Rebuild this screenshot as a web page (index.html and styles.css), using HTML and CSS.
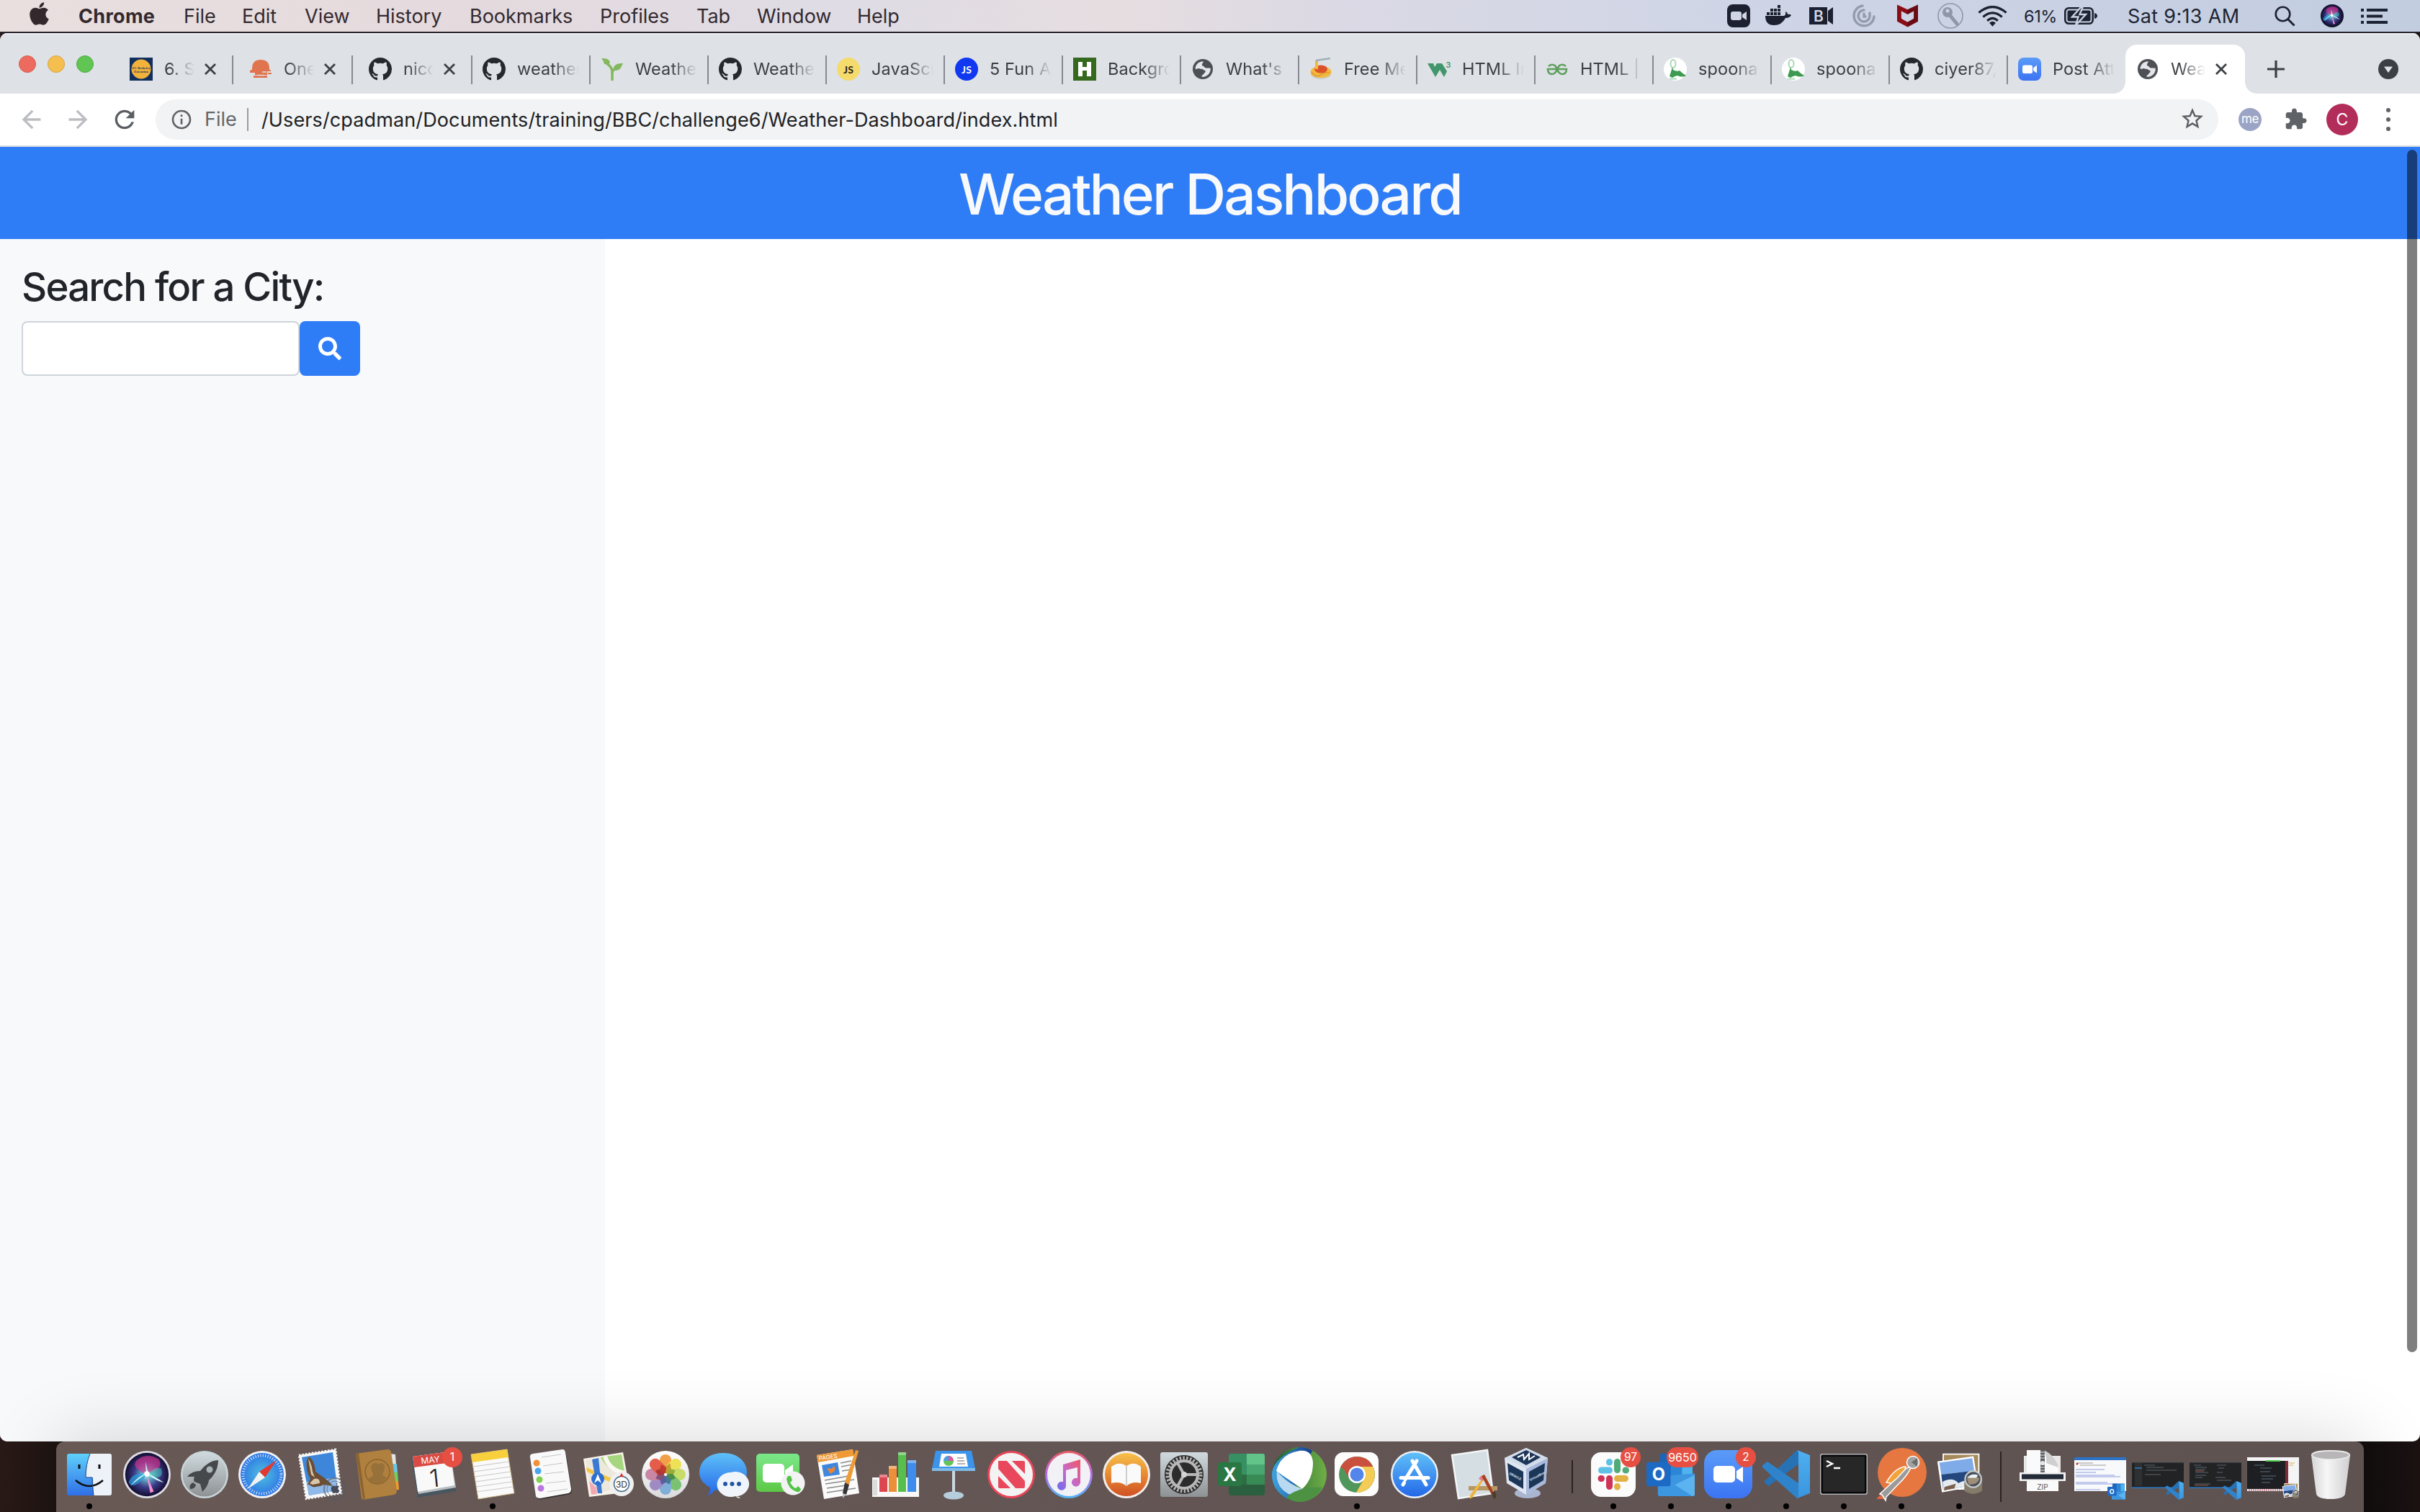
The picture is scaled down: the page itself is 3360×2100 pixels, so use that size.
FILE: index.html
```html
<!DOCTYPE html>
<html lang="en">
<head>
<meta charset="utf-8">
<title>Weather Dashboard</title>
<link rel="stylesheet" href="styles.css">
</head>
<body>
<svg class="defs" width="0" height="0">
  <defs>
    <linearGradient id="gBlue" x1="0" y1="0" x2="0" y2="1"><stop offset="0" stop-color="#5fc0f8"/><stop offset="1" stop-color="#2468e8"/></linearGradient>
    <linearGradient id="gZoom" x1="0" y1="0" x2="0" y2="1"><stop offset="0" stop-color="#5a9bf8"/><stop offset="1" stop-color="#3c74f2"/></linearGradient>
    <linearGradient id="gFinder" x1="0" y1="0" x2="0" y2="1"><stop offset="0" stop-color="#5fd0fa"/><stop offset="1" stop-color="#2f6fe8"/></linearGradient>
    <linearGradient id="gSilver" x1="0" y1="0" x2="0" y2="1"><stop offset="0" stop-color="#d0dade"/><stop offset="1" stop-color="#8e9294"/></linearGradient>
    <linearGradient id="gWhite" x1="0" y1="0" x2="0" y2="1"><stop offset="0" stop-color="#fff"/><stop offset="1" stop-color="#d9dadc"/></linearGradient>
    <linearGradient id="gGreen" x1="0" y1="0" x2="0" y2="1"><stop offset="0" stop-color="#7be88a"/><stop offset="1" stop-color="#5cc845"/></linearGradient>
    <linearGradient id="gOrange" x1="0" y1="0" x2="0" y2="1"><stop offset="0" stop-color="#f7c04b"/><stop offset=".5" stop-color="#e88a32"/><stop offset="1" stop-color="#cf5124"/></linearGradient>
    <linearGradient id="gMusic" x1="0" y1="0" x2="0" y2="1"><stop offset="0" stop-color="#ee5a5f"/><stop offset=".5" stop-color="#b46be8"/><stop offset="1" stop-color="#52b8f5"/></linearGradient>
    <linearGradient id="gNote" x1="1" y1="0" x2="0" y2="1"><stop offset="0" stop-color="#f05660"/><stop offset=".5" stop-color="#c968c8"/><stop offset="1" stop-color="#6a6cf0"/></linearGradient>
    <linearGradient id="gCode" x1="0" y1="0" x2="0" y2="1"><stop offset="0" stop-color="#4fb0f0"/><stop offset="1" stop-color="#3a95de"/></linearGradient>
    <linearGradient id="gCan" x1="0" y1="0" x2="1" y2="0"><stop offset="0" stop-color="#d6d6d8"/><stop offset=".4" stop-color="#f6f6f6"/><stop offset="1" stop-color="#cfcfd1"/></linearGradient>
    <linearGradient id="gMesh" x1="0" y1="0" x2="1" y2="0"><stop offset="0" stop-color="#1e5f35"/><stop offset="1" stop-color="#6fae45"/></linearGradient>
    <linearGradient id="gRing" x1="0" y1="0" x2="1" y2="0"><stop offset="0" stop-color="#3fa4e0"/><stop offset="1" stop-color="#143c8c"/></linearGradient>
    <radialGradient id="gSafari"><stop offset="0" stop-color="#4fc0de"/><stop offset="1" stop-color="#2e76e6"/></radialGradient>
    <radialGradient id="gSiri"><stop offset="0" stop-color="#f4ffff"/><stop offset=".2" stop-color="#68b9cf"/><stop offset=".6" stop-color="#3a3a86"/><stop offset="1" stop-color="#130c30"/></radialGradient>

    <symbol id="github" viewBox="0 0 16 16"><path fill="#24292e" d="M8 0C3.58 0 0 3.58 0 8c0 3.54 2.29 6.53 5.47 7.59.4.07.55-.17.55-.38 0-.19-.01-.82-.01-1.49-2.01.37-2.53-.49-2.69-.94-.09-.23-.48-.94-.82-1.13-.28-.15-.68-.52-.01-.53.63-.01 1.08.58 1.23.82.72 1.21 1.87.87 2.33.66.07-.52.28-.87.51-1.07-1.78-.2-3.64-.89-3.64-3.95 0-.87.31-1.59.82-2.15-.08-.2-.36-1.02.08-2.12 0 0 .67-.21 2.2.82.64-.18 1.32-.27 2-.27.68 0 1.36.09 2 .27 1.53-1.04 2.2-.82 2.2-.82.44 1.1.16 1.92.08 2.12.51.56.82 1.27.82 2.15 0 3.07-1.87 3.75-3.65 3.95.29.25.54.73.54 1.48 0 1.07-.01 1.93-.01 2.2 0 .21.15.46.55.38A8.013 8.013 0 0016 8c0-4.42-3.58-8-8-8z"/></symbol>
    <symbol id="globe" viewBox="0 0 32 32"><circle cx="16" cy="16" r="14" fill="#4d5156"/><path class="land" d="M5.500 15.500C6 10 10 5.500 16.500 5.300C17.300 7 14.300 8.300 15 10.500C15.500 12.300 18 11.600 18.500 13.500C19.500 15.500 24 13.800 26.800 15C27 20 24 25.500 17.500 26.800C14.500 27.200 13.500 25.500 15.500 24.200C17.500 23.500 17.300 21.500 19 20.800C20.500 19.300 19.500 17.500 17.500 17.500C16 15.200 13 16.500 11.500 15.300C9.500 14 7.500 16.500 5.500 15.500Z"/></symbol>
    <symbol id="spoon" viewBox="0 0 32 32"><circle cx="16" cy="16" r="16" fill="#fff"/><ellipse cx="13" cy="8.500" rx="3.500" ry="5.500" fill="none" stroke="#a9d8b4" stroke-width="2"/><path d="M12 13L13 17Q18 20 22 18Q26 22 31 25Q26 28 19 25Q14 26 12 28L8 26Q10 20 12 13Z" fill="#3f9a51"/><path d="M8 28H18V31H8Z" fill="#c5e5cc"/></symbol>
    <symbol id="close" viewBox="0 0 20 20"><path d="M3 3L17 17M17 3L3 17" stroke="#3c4043" stroke-width="2.800"/></symbol>
    <symbol id="siri" viewBox="0 0 70 70"><circle cx="35" cy="35" r="32" fill="url(#gSiri)"/><path d="M35 35Q10 24 20 14Q34 2 52 12Q62 26 35 35Z" fill="#d8328e" opacity=".65"/><path d="M35 35Q14 60 8 46Q14 30 35 35Z" fill="#2aa2e0" opacity=".7"/><path d="M35 35Q62 46 56 26Q48 22 35 35Z" fill="#4ed5c0" opacity=".5"/><path d="M34 34L40 62L45 60Z" fill="#f590cf"/><path d="M35 33Q20 44 10 52Q24 36 35 33ZM35 33Q50 40 60 47Q46 44 35 33ZM34 35L33 16L37 34Z" fill="#cffff5"/><circle cx="35" cy="34" r="4" fill="#fff"/></symbol>
    <symbol id="code" viewBox="0 0 66 67"><path d="M2 44L8 50L66 8L48 0Z" fill="#2772b5"/><path d="M0 21L7 16L50 46V67L48 67L0 24Z" fill="#2f83cb"/><path d="M48 0L66 7V60L48 67Q50 66 50 62V4Q50 1 48 0Z" fill="url(#gCode)"/></symbol>
    <symbol id="outlook" viewBox="0 0 68 66"><rect x="19" y="6" width="46" height="38" rx="2" fill="#1a66b8"/><rect x="34" y="8" width="16" height="34" fill="#2b86d6"/><rect x="50" y="8" width="15" height="34" fill="#4fb3ee"/><path d="M16 38L68 34V63Q68 66 65 66H19Q16 66 16 63Z" fill="#3c96e0"/><path d="M68 36V63Q68 66 65 66L40 50Z" fill="#5bb4f0"/><rect x="0" y="18" width="34" height="34" rx="3" fill="#1d6ac4"/><text x="17" y="44" class="t-outlook">O</text></symbol>
    <symbol id="preview" viewBox="0 0 70 70"><path d="M10 3H66V58H10Z" fill="#fff"/><path d="M12 5H64V56H12Z" fill="#a58a5c"/><path d="M2 15L57 7L64 52L9 62Z" fill="#fff"/><path d="M5 17L55 10L58 29L8 35Z" fill="#7fabe8"/><path d="M8 35L58 29L61 50L11 59Z" fill="#24477e"/><path d="M10 46Q25 38 34 48Q45 42 60 44L61 50L11 59Z" fill="#e4eaf0"/><path d="M13 54L30 49L28 56L12 59Z" fill="#7b5f4a"/><path d="M43 42V60Q56 69 70 60V42Z" fill="#847b69"/><circle cx="56.500" cy="42" r="13.500" fill="#c6c8c8"/><circle cx="56.500" cy="42" r="11" fill="#48505a"/><path d="M47 42Q55 33 66 41Q63 51 50 50Z" fill="#a08f78"/><path d="M47 40Q54 32 64 36L61 40Z" fill="#eef3f7"/></symbol>
  </defs>
</svg>

<header class="menubar">
  <svg class="apple" viewBox="0 0 384 512"><path fill="#33282b" d="M318.700 268.700c-.2-36.700 16.400-64.400 50-84.800-18.800-26.900-47.200-41.700-84.700-44.600-35.500-2.800-74.300 20.700-88.500 20.700-15 0-49.400-19.700-76.400-19.700C63.300 141.200 4 184.800 4 273.500q0 39.300 14.400 81.200c12.800 36.700 59 126.700 107.200 125.200 25.200-.6 43-17.900 75.800-17.900 31.800 0 48.300 17.900 76.400 17.900 48.600-.7 90.400-82.500 102.600-119.300-65.200-30.700-61.700-90-61.700-91.900zm-56.600-164.200c27.300-32.400 24.800-61.900 24-72.500-24.100 1.400-52 16.400-67.900 34.900-17.500 19.800-27.800 44.300-25.600 71.900 26.100 2 49.900-11.400 69.500-34.300z"/></svg>
  <nav class="menus"><b>Chrome</b><span>File</span><span>Edit</span><span>View</span><span>History</span><span>Bookmarks</span><span>Profiles</span><span>Tab</span><span>Window</span><span>Help</span></nav>
  <div class="status">
    <svg class="s-zoom" viewBox="0 0 32 32"><rect width="32" height="32" rx="8" fill="#1c2030"/><rect x="5" y="10" width="15" height="12" rx="3" fill="#cfd5e5"/><path d="M21 14L27 10V22L21 18Z" fill="#cfd5e5"/></svg>
    <svg class="s-docker" viewBox="0 0 36 30"><path fill="#1c2030" d="M0 15H26Q29 14 28 9Q31 10 31 13Q34 12 36 14Q34 18 28 18Q23 28 12 28Q0 28 0 15ZM2 10h4v4H2zM7 10h4v4H7zM12 10h4v4h-4zM17 10h4v4h-4zM7 5h4v4H7zM12 5h4v4h-4zM17 5h4v4h-4zM17 0h4v4h-4z"/></svg>
    <svg class="s-b" viewBox="0 0 33 24"><path fill="#1c2030" d="M0 0H25V24H0ZM26 5L33 0V24L26 19Z"/><text x="13" y="20" class="t-bj">B</text></svg>
    <svg class="s-swirl" viewBox="0 0 32 32"><g fill="none" stroke="#959cae" stroke-width="3.500" stroke-linecap="round"><path d="M14 2A14 14 0 1 0 30 17"/><path d="M16 8A8 8 0 1 0 24 17V12"/><path d="M16 13V17H18"/></g></svg>
    <svg class="s-shield" viewBox="0 0 30 32"><path fill="#8a0d16" d="M0 0L15 7L30 0V24L15 32L0 24Z"/><path fill="#ced5e5" d="M6 9L15 14L24 9V20L15 25L6 20Z"/><path fill="#4a0710" d="M15 7L30 0V24L15 32V25L24 20V9L15 14Z" opacity=".5"/></svg>
    <svg class="s-key" viewBox="0 0 36 36"><circle cx="18" cy="18" r="17" fill="none" stroke="#8e96a8" stroke-width="1.600"/><circle cx="14" cy="13" r="7" fill="#8e96a8"/><circle cx="14" cy="11" r="2.500" fill="#cbd3e3"/><path d="M17 17L27 29" stroke="#8e96a8" stroke-width="5" stroke-linecap="round"/></svg>
    <svg class="s-wifi" viewBox="0 0 42 29"><g fill="none" stroke="#1c2130" stroke-width="3.300"><path d="M1.500 9.500Q21-7 40.500 9.500"/><path d="M7.500 15.500Q21 4 34.500 15.500"/><path d="M13.500 21Q21 14 28.500 21"/></g><path d="M16.500 24Q21 20 25.500 24L21 29Z" fill="#1c2130"/></svg>
    <span class="pct">61%</span>
    <svg class="s-batt" viewBox="0 0 46 24"><rect x="1.300" y="1.300" width="38.400" height="21.400" rx="5" fill="none" stroke="#1c2332" stroke-width="2.600"/><rect x="4.500" y="4.500" width="32" height="15" rx="2" fill="#1c2332"/><path d="M42 8Q46 9 46 12T42 16Z" fill="#1c2332"/><path d="M24 -1L11 13.500H19.500L16 25L30 10H21.500L26 -1Z" fill="#1c2332" stroke="#c9d2e2" stroke-width="2.400"/></svg>
    <span class="clock">Sat 9:13 AM</span>
    <svg class="s-search" viewBox="0 0 29 29"><circle cx="11.500" cy="11.500" r="9.800" fill="none" stroke="#1c2332" stroke-width="2.600"/><path d="M18.500 18.500L27.500 27.500" stroke="#1c2332" stroke-width="3"/></svg>
    <svg class="s-siri" viewBox="1 1 68 68"><circle cx="35" cy="35" r="34" fill="#12162a"/><use href="#siri"/></svg>
    <svg class="s-list" viewBox="0 0 37 21"><path fill="#1c2332" d="M0 0h4v4H0zM8 0h29v4H8zM0 8.500h4v4H0zM8 8.500h22v4H8zM0 17h4v4H0zM8 17h29v4H8z"/></svg>
  </div>
</header>

<main class="window">
  <div class="tabstrip">
    <div class="lights"><i class="red"></i><i class="yellow"></i><i class="green"></i></div>
    <div class="tab wide"><svg viewBox="0 0 32 32"><rect width="32" height="32" fill="#12305e"/><circle cx="16" cy="16" r="13.500" fill="#f2b23c"/><text x="16" y="15.500" class="t-ucb">UC Berkeley</text><text x="16" y="21" class="t-ucb">Extension</text></svg><span>6. S</span><svg class="x"><use href="#close"/></svg></div>
    <div class="tab wide"><svg viewBox="0 0 32 32"><path fill="#e0744f" d="M4 17V15Q4 3 16 3T28 15V17H30V19H2V17ZM1 18H17V21H1ZM19 21H24V23H19ZM26 21H31V23H26ZM8 19H25V24H8ZM6 25H25V28H6Z"/><path d="M18 20H24M25 20H30M12 24.500H21" stroke="#dee1e6" stroke-width="1.500"/></svg><span>One</span><svg class="x"><use href="#close"/></svg></div>
    <div class="tab wide"><svg><use href="#github"/></svg><span>nico</span><svg class="x"><use href="#close"/></svg></div>
    <div class="tab"><svg><use href="#github"/></svg><span>weather</span></div>
    <div class="tab"><svg viewBox="0 0 32 32"><path d="M16 32V19Q15 12 8 8" fill="none" stroke="#83b85d" stroke-width="3.500"/><path d="M1 1Q12 0 13 7L11 9H5Q4 4 1 1ZM31 8Q18 7 17 17L19 18Q26 18 28 14Z" fill="#83b85d"/><path d="M16 22Q17 16 22 15" stroke="#83b85d" stroke-width="3" fill="none"/></svg><span>Weather</span></div>
    <div class="tab"><svg><use href="#github"/></svg><span>Weather</span></div>
    <div class="tab"><svg viewBox="0 0 32 32"><circle cx="16" cy="16" r="16" fill="#f5da6c"/><text x="16" y="21.500" class="t-js">JS</text></svg><span>JavaScri</span></div>
    <div class="tab"><svg viewBox="0 0 32 32"><circle cx="16" cy="16" r="16" fill="#0f38f0"/><text x="16" y="21.500" class="t-js light">JS</text></svg><span>5 Fun A</span></div>
    <div class="tab"><svg viewBox="0 0 32 32"><rect width="32" height="32" fill="#35691e"/><path d="M7 6h6v7h6V6h6v20h-6v-8h-6v8H7z" fill="#fff"/></svg><span>Backgro</span></div>
    <div class="tab"><svg><use href="#globe"/></svg><span>What's</span></div>
    <div class="tab"><svg viewBox="0 0 32 32"><ellipse cx="16" cy="23" rx="14" ry="7" fill="#c9cfcb"/><ellipse cx="16" cy="20" rx="14.500" ry="8" fill="#f2b93f"/><path d="M3 20Q9 29 16 24T28 21" fill="none" stroke="#e09a2c" stroke-width="1.500"/><ellipse cx="16" cy="16" rx="9" ry="5.500" fill="#dd5329"/><path d="M10 4V16" stroke="#f2b93f" stroke-width="4"/><path d="M9 4L29 1" stroke="#9db0b9" stroke-width="2.500"/></svg><span>Free Me</span></div>
    <div class="tab"><svg viewBox="0 0 32 32"><path d="M0 8H8L10 13L13 8H20L27 19L23 27L17 17L11 27Z" fill="#41976b"/><text x="29" y="14" class="t-w3">3</text></svg><span>HTML In</span></div>
    <div class="tab"><svg viewBox="0 0 32 32"><g fill="none" stroke="#5f9f5e" stroke-width="2.600"><path d="M4 12Q8 8 13 11L16 16H3Q3 22 8 23Q14 23 16 16"/><path d="M28 12Q24 8 19 11L16 16H29Q29 22 24 23Q18 23 16 16"/></g></svg><span>HTML |</span></div>
    <div class="tab"><svg><use href="#spoon"/></svg><span>spoona</span></div>
    <div class="tab"><svg><use href="#spoon"/></svg><span>spoona</span></div>
    <div class="tab"><svg><use href="#github"/></svg><span>ciyer87,</span></div>
    <div class="tab last"><svg viewBox="0 0 32 32"><rect width="32" height="32" rx="8" fill="url(#gZoom)"/><rect x="6" y="10.500" width="14" height="11.500" rx="2.500" fill="#fff"/><path d="M21 14.500L26 10.500V21.500L21 18Z" fill="#fff"/></svg><span>Post Att</span></div>
    <div class="tab active"><svg><use href="#globe"/></svg><span>Wea</span><svg class="x"><use href="#close"/></svg></div>
    <svg class="plus" viewBox="0 0 24 24"><path d="M12 0V24M0 12H24" stroke="#3c4043" stroke-width="3.200"/></svg>
    <svg class="drop" viewBox="0 0 28 28"><circle cx="14" cy="14" r="14" fill="#3c4043"/><path d="M8 10.500H20L14 19Z" fill="#dee1e6"/></svg>
  </div>

  <div class="toolbar">
    <svg class="nav-i" viewBox="0 0 24 24"><path fill="#bbbdc0" d="M19.500 11H7.830l5.590-5.590L12 4l-8 8 8 8 1.410-1.410L7.830 13H19.500z"/></svg>
    <svg class="nav-i fwd" viewBox="0 0 24 24"><path fill="#bbbdc0" d="M12 4l-1.410 1.410L16.170 11H4.500v2h11.670l-5.580 5.590L12 20l8-8z"/></svg>
    <svg class="nav-i rel" viewBox="0 0 24 24"><path fill="#5a5e63" d="M17.650 6.350C16.200 4.900 14.210 4 12 4c-4.420 0-7.990 3.580-7.990 8s3.570 8 7.990 8c3.730 0 6.840-2.550 7.730-6h-2.080c-.82 2.330-3.040 4-5.650 4-3.310 0-6-2.690-6-6s2.690-6 6-6c1.660 0 3.140.69 4.220 1.780L13 11h7V4l-2.350 2.350z"/></svg>
    <div class="omnibox">
      <svg class="info" viewBox="0 0 24 24"><path fill="#5f6368" d="M11 7h2v2h-2zm0 4h2v6h-2zm1-9C6.480 2 2 6.480 2 12s4.480 10 10 10 10-4.480 10-10S17.520 2 12 2zm0 18c-4.410 0-8-3.590-8-8s3.590-8 8-8 8 3.590 8 8-3.590 8-8 8z"/></svg>
      <span class="scheme">File</span>
      <span class="url">/Users/cpadman/Documents/training/BBC/challenge6/Weather-Dashboard/index.html</span>
      <svg class="star" viewBox="0 0 24 24"><path fill="#5a5e63" d="M22 9.240l-7.190-.62L12 2 9.190 8.630 2 9.240l5.460 4.730L5.820 21 12 17.270 18.180 21l-1.630-7.030L22 9.240zM12 15.400l-3.760 2.270 1-4.280-3.320-2.880 4.380-.38L12 6.100l1.710 4.040 4.380.38-3.320 2.880 1 4.280L12 15.400z"/></svg>
    </div>
    <span class="me">me</span>
    <svg class="puzzle" viewBox="0 0 24 24"><path fill="#5f6368" d="M20.500 11H19V7c0-1.100-.9-2-2-2h-4V3.500C13 2.120 11.880 1 10.500 1S8 2.120 8 3.500V5H4c-1.100 0-1.990.9-1.990 2v3.800H3.500c1.490 0 2.700 1.210 2.700 2.700s-1.210 2.700-2.700 2.700H2V20c0 1.100.9 2 2 2h3.800v-1.500c0-1.490 1.210-2.700 2.700-2.700 1.490 0 2.700 1.210 2.700 2.700V22H17c1.100 0 2-.9 2-2v-4h1.500c1.380 0 2.500-1.120 2.500-2.500S21.880 11 20.500 11z"/></svg>
    <span class="avatar">C</span>
    <span class="kebab"><i></i><i></i><i></i></span>
  </div>

  <div class="page">
    <h1>Weather Dashboard</h1>
    <aside class="sidebar">
      <h3>Search for a City:</h3>
      <form class="search">
        <input type="text" aria-label="City">
        <button type="button" aria-label="Search"><svg viewBox="0 0 512 512"><path fill="#fff" d="M505 442.700L405.300 343c-4.500-4.500-10.600-7-17-7H372c27.600-35.300 44-79.700 44-128C416 93.100 322.900 0 208 0S0 93.100 0 208s93.100 208 208 208c48.300 0 92.700-16.400 128-44v16.300c0 6.400 2.500 12.500 7 17l99.700 99.700c9.400 9.400 24.600 9.400 33.900 0l28.300-28.300c9.400-9.400 9.400-24.600.1-34zM208 336c-70.700 0-128-57.200-128-128 0-70.700 57.200-128 128-128 70.700 0 128 57.200 128 128 0 70.700-57.200 128-128 128z"/></svg></button>
      </form>
    </aside>
    <div class="scrollbar"></div>
  </div>
</main>

<footer class="dock">
  <div class="app on"><svg viewBox="0 0 80 90"><rect x="9" y="17" width="62" height="58" rx="3" fill="url(#gFinder)"/><path d="M41 17H68Q71 17 71 20V72Q71 75 68 75H46Q45 62 45 50H35Q35 30 41 17Z" fill="#edf1f8"/><path d="M26 32V38M54 32V38" stroke="#111" stroke-width="3"/><path d="M21 54Q40 70 59 54" fill="none" stroke="#111" stroke-width="2.500"/><path d="M41 17Q35 32 35 50H44Q44 62 46 75" fill="none" stroke="#1a4a80" stroke-width="1"/></svg></div>
  <div class="app"><svg viewBox="0 0 80 90"><circle cx="40" cy="46" r="33" fill="#dedee6"/><use href="#siri" x="7" y="13" width="66" height="66"/></svg></div>
  <div class="app"><svg viewBox="0 0 80 90"><circle cx="40" cy="46" r="33" fill="#c9d6db"/><circle cx="40" cy="46" r="30.500" fill="url(#gSilver)"/><path d="M59 26Q46 26 34 41Q22 41 16 49L26 49Q24 53 26 56L34 59Q35 63 37 70Q45 62 46 54Q59 42 59 26ZM24 57Q18 60 20 66Q27 66 28 60Z" fill="#46494b"/><circle cx="47" cy="39" r="4.500" fill="#aab3b7"/></svg></div>
  <div class="app"><svg viewBox="0 0 80 90"><circle cx="40" cy="46" r="33" fill="#f1f1f3"/><circle cx="40" cy="46" r="30" fill="url(#gSafari)"/><circle cx="40" cy="46" r="26.500" fill="none" stroke="#e6f0fa" stroke-width="4" stroke-dasharray="1 2.470"/><path d="M60 26L44 50L36 42Z" fill="#e2382f"/><path d="M20 66L44 50L36 42Z" fill="#f2f2f2"/></svg></div>
  <div class="app"><svg viewBox="0 0 80 90"><path d="M11 19L62 11L70 72L21 80Z" fill="#f7f7f7" stroke="#f7f7f7" stroke-width="2.500" stroke-dasharray="2.500 2"/><path d="M15 22L58 15L65 68L25 75Z" fill="#3e86da"/><path d="M22 56L63 50L65 68L25 75Z" fill="#8fb9e8"/><path d="M22 26L25 21Q33 27 34 42L44 49Q54 56 58 62L46 60Q38 64 30 63L23 59L27 52Q20 40 22 26Z" fill="#6b4e33"/><path d="M24 24Q29 32 30 42L33 50L28 46ZM32 52Q40 50 40 58L30 60L26 58Z" fill="#d8c6ab"/><circle cx="61" cy="66" r="15" fill="none" stroke="#555a64" stroke-width="2" opacity=".65"/><circle cx="61" cy="66" r="11" fill="none" stroke="#555a64" stroke-width="1" opacity=".6"/><svg x="55" y="57" width="13" height="16" viewBox="0 0 384 512"><path fill="#454c5c" d="M318.700 268.700c-.2-36.700 16.400-64.400 50-84.800-18.800-26.900-47.200-41.700-84.700-44.600-35.500-2.800-74.300 20.700-88.500 20.700-15 0-49.400-19.700-76.400-19.700C63.300 141.200 4 184.800 4 273.500q0 39.300 14.400 81.200c12.800 36.700 59 126.700 107.200 125.200 25.200-.6 43-17.900 75.800-17.900 31.800 0 48.300 17.900 76.400 17.900 48.600-.7 90.400-82.500 102.600-119.300-65.200-30.700-61.700-90-61.700-91.900zm-56.600-164.200c27.300-32.400 24.800-61.900 24-72.500-24.100 1.400-52 16.400-67.900 34.900z"/></svg></svg></div>
  <div class="app"><svg viewBox="0 0 80 90"><path d="M50 16L65 18L66 34H58Z" fill="#e4e4e4"/><path d="M60 31H67L68 44H60Z" fill="#6cc5e6"/><path d="M60 43H68L69 56H60Z" fill="#6ed05f"/><path d="M60 55H69L70 67H60Z" fill="#f29a2c"/><path d="M10 17L54 11Q58 11 59 15L67 68Q67 73 63 74L20 81L18 79Z" fill="#b0803f"/><path d="M10 17L14 16L23 80L20 81Z" fill="#8c6330"/><circle cx="40" cy="42" r="17" fill="none" stroke="#8b642f" stroke-width="1.500"/><path d="M27 52Q35 48 34 45Q28 34 35 30Q40 29 41 32Q47 27 50 34Q50 42 47 45Q47 48 53 50Q47 58 40 58Q32 58 27 52Z" fill="#97703a"/></svg></div>
  <div class="app"><svg viewBox="0 0 80 90"><path d="M7 24L14 20L69 66L70 69L16 78Z" fill="#48565f"/><path d="M9 21L61 14L69 64L17 73Z" fill="#b9bec2"/><path d="M9 21L61 14L67 61L16 70Z" fill="#f9f9f9"/><path d="M9 21L61 14L64 29L11 36Z" fill="#d84a43"/><text x="34" y="30" class="t-may" transform="rotate(-7 34 30)">MAY</text><text x="40" y="63" class="t-day" transform="rotate(-6 40 60)">1</text></svg><em>1</em></div>
  <div class="app on"><svg viewBox="0 0 80 90"><path d="M10 18L60 11L70 72L20 80Z" fill="#fafafa" stroke="#c9b683" stroke-width="1"/><path d="M10 18L60 11L62 22L12 29Z" fill="#f8cf3d"/><path d="M13 35L63 28M14 42L64 35M15 49L65 42M16 56L66 49M17 63L67 56M18 70L68 63" stroke="#c9c9c9" stroke-width="1.200"/></svg></div>
  <div class="app"><svg viewBox="0 0 80 90"><path d="M12 22Q11 18 16 17L57 11Q60 11 61 15L69 66Q69 71 65 72L26 79Q21 79 20 76Z" fill="#33302f" transform="translate(1 1.500)"/><path d="M12 22Q11 18 16 17L57 11Q60 11 61 15L69 66Q69 71 65 72L26 79Q21 79 20 76Z" fill="#f9f9f9"/><circle cx="21" cy="30" r="4.500" fill="#f29037"/><circle cx="23" cy="41" r="4.500" fill="#49a6ee"/><circle cx="25" cy="53" r="4.500" fill="#7fd14f"/><circle cx="27" cy="65" r="4.500" fill="#bb77df"/><path d="M28 22L55 18M30 34L57 30M32 45L59 42M34 58L62 55M36 70L64 66" stroke="#c6c6c6"/></svg></div>
  <div class="app"><svg viewBox="0 0 80 90"><path d="M6 24L61 15L71 70L14 77Z" fill="#f6f3ea"/><path d="M9 26L59 18L66 62L17 74Z" fill="#ede8dc"/><path d="M30 22L59 18L63 42Q40 42 30 22Z" fill="#a6d67d"/><path d="M36 21Q42 40 63 44" fill="none" stroke="#faf8f2" stroke-width="6"/><path d="M10 36L66 60L65 66L11 42Z" fill="#f5c544"/><path d="M14 55L24 64L25 73L17 74Z" fill="#f2a9b2"/><path d="M18 25L27 23L32 72H26Z" fill="#3b7ad3"/><circle cx="26" cy="52" r="9" fill="#2c6fd3"/><path d="M26 45L31 58L26 54L21 58Z" fill="#fff"/><circle cx="59" cy="59" r="17" fill="#f0f0f0"/><circle cx="59" cy="59" r="10.500" fill="#fff" stroke="#456c86" stroke-width="1.500"/><text x="59" y="63.500" class="t-3d">3D</text><path d="M59 44L62 49H56Z" fill="#da302e"/></svg></div>
  <div class="app"><svg viewBox="0 0 80 90"><circle cx="40" cy="46" r="33" fill="url(#gWhite)"/><g transform="translate(40 46)" opacity=".92"><rect x="-8" y="-28" width="16" height="26" rx="8" fill="#f2993a"/><rect x="-8" y="-28" width="16" height="26" rx="8" fill="#efe04a" transform="rotate(45)"/><rect x="-8" y="-28" width="16" height="26" rx="8" fill="#c5dc5e" transform="rotate(90)"/><rect x="-8" y="-28" width="16" height="26" rx="8" fill="#72bf68" transform="rotate(135)"/><rect x="-8" y="-28" width="16" height="26" rx="8" fill="#78acd8" transform="rotate(180)"/><rect x="-8" y="-28" width="16" height="26" rx="8" fill="#9a84c2" transform="rotate(225)"/><rect x="-8" y="-28" width="16" height="26" rx="8" fill="#c57f9f" transform="rotate(270)"/><rect x="-8" y="-28" width="16" height="26" rx="8" fill="#e3503c" transform="rotate(315)"/></g><g transform="translate(40 46)" opacity=".6"><path d="M0 0L-5-9L0-17L5-9Z" transform="rotate(22)" fill="#a8731a"/><path d="M0 0L-5-9L0-15L5-9Z" transform="rotate(67)" fill="#7c8a1c"/><path d="M0 0L-5-9L0-15L5-9Z" transform="rotate(112)" fill="#2c6e2a"/><path d="M0 0L-5-9L0-15L5-9Z" transform="rotate(157)" fill="#1f5c5c"/><path d="M0 0L-5-9L0-15L5-9Z" transform="rotate(202)" fill="#2f3f86"/><path d="M0 0L-5-9L0-15L5-9Z" transform="rotate(247)" fill="#56305e"/><path d="M0 0L-5-9L0-15L5-9Z" transform="rotate(292)" fill="#8a1f2c"/><path d="M0 0L-5-9L0-15L5-9Z" transform="rotate(337)" fill="#a82a14"/></g><circle cx="40" cy="46" r="2" fill="#fff"/></svg></div>
  <div class="app"><svg viewBox="0 0 80 90"><path d="M40 16C60 16 73 28 73 43S60 69 40 69Q34 69 29 67Q25 73 18 75Q23 69 22 64Q7 56 7 43C7 28 20 16 40 16Z" fill="url(#gBlue)"/><path d="M51 43A19 17 0 1 1 55 76Q60 76 64 78Q61 80 57 76A19 17 0 1 1 51 43Z" fill="#f0f5fb"/><circle cx="43" cy="59" r="3" fill="#2257a5"/><circle cx="52.500" cy="59" r="3" fill="#2257a5"/><circle cx="62" cy="59" r="3" fill="#2257a5"/></svg></div>
  <div class="app"><svg viewBox="0 0 80 90"><rect x="6" y="17" width="60" height="53" rx="5" fill="url(#gGreen)"/><rect x="15" y="31" width="30" height="26" rx="5" fill="#fff"/><path d="M46 40L57 32V56L46 50Z" fill="#fff"/><circle cx="57" cy="58" r="16.500" fill="#f2f3f2"/><path d="M50 48L54 48L56 54L53 57Q57 64 61 65L64 62L68 66Q67 71 62 70Q50 66 48 52Z" fill="#52c446"/></svg></div>
  <div class="app"><svg viewBox="0 0 80 90"><path d="M10 19L60 11L69 72L20 80Z" fill="#fbfbfb"/><path d="M10 19L60 11L62 20L12 29Z" fill="#f09a36"/><text x="26" y="24.500" class="t-pages" transform="rotate(-8 26 24)">PAGES</text><path d="M17 33L39 29L42 46L20 49Z" fill="#3f87dc"/><path d="M29 45L24 37L30 38L35 34L35 41Z" fill="#ef8430"/><path d="M43 30L58 27M44 35L60 32M45 41L58 39M21 54L54 48M22 59L62 53M24 65L50 61M24 71L64 65" stroke="#8a8a8a" stroke-width="1.300"/><path d="M64 12L68 13L55 60L49 57Z" fill="#ee9c36"/><path d="M49 57L55 60L51 74L46 72Z" fill="#353535"/><path d="M46 72L50 74L46 79Z" fill="#b8c4cc"/></svg></div>
  <div class="app"><svg viewBox="0 0 80 90"><path d="M7 50H72V77H7Z" fill="#f8f8f8"/><path d="M8 53H14V75H8Z" fill="#dcdcdc"/><path d="M17 46H28V70H17Z" fill="#dc4650"/><path d="M30 34H41V70H30Z" fill="#eb8f3a"/><path d="M43 15H54V70H43Z" fill="#56bf4e"/><path d="M56 26H68V70H56Z" fill="#3e8dec"/><path d="M17 46H28V50H17ZM30 34H41V38H30ZM43 15H54V19H43ZM56 26H68V30H56Z" fill="#fff" opacity=".35"/></svg></div>
  <div class="app"><svg viewBox="0 0 80 90"><path d="M38 40H42V72H38Z" fill="#ccd7e0"/><ellipse cx="40" cy="75" rx="14" ry="5.500" fill="#b6cddd"/><path d="M15 13H65L70 38V40H10V38Z" fill="#3b94ea"/><path d="M10 37H70V41H10Z" fill="#7fbbe8"/><path d="M23 17H57L60 35H20Z" fill="#fdfdfd"/><circle cx="33" cy="27" r="7" fill="#62c557"/><path d="M33 27V20A7 7 0 0 1 40 27Z" fill="#df5a9a"/><path d="M33 27H26A7 7 0 0 1 33 20Z" fill="#4aa0e8"/><path d="M45 23H54M45 27H55M45 31H56" stroke="#999" stroke-width="1.500"/></svg></div>
  <div class="app"><svg viewBox="0 0 80 90"><circle cx="40" cy="46" r="33" fill="#ea4458"/><circle cx="40" cy="46" r="30" fill="#f3f3f3"/><path d="M22 27H34L59 55V63Q59 65 57 65H46L22 38ZM41 27H57Q59 27 59 29V45ZM22 48L39 65H24Q22 65 22 63Z" fill="#e9475b"/></svg></div>
  <div class="app"><svg viewBox="0 0 80 90"><circle cx="40" cy="46" r="33" fill="url(#gMusic)"/><circle cx="40" cy="46" r="30" fill="#f1f1f6"/><path d="M32 32L56 25V57A6 6 0 1 1 52 51V36L36 40V61A6 6 0 1 1 32 56Z" fill="url(#gNote)"/></svg></div>
  <div class="app"><svg viewBox="0 0 80 90"><circle cx="40" cy="46" r="33" fill="#f3efec"/><circle cx="40" cy="46" r="30" fill="url(#gOrange)"/><path d="M19 35Q30 27 40 34Q50 27 60 35V58Q48 55 40 62Q32 55 19 58Z" fill="#fafafa"/><path d="M40 34V62" stroke="#bcbcbc" stroke-width="1.500"/></svg></div>
  <div class="app"><svg viewBox="0 0 80 90"><rect x="7" y="15" width="66" height="62" rx="3" fill="url(#gSilver)"/><circle cx="40" cy="46" r="27" fill="#2c2c2d"/><circle cx="40" cy="46" r="23" fill="none" stroke="#b4b4b4" stroke-width="5" stroke-dasharray="2.500 2.320"/><circle cx="40" cy="46" r="19" fill="none" stroke="#b8b8b8" stroke-width="4"/><path d="M40 46H59M40 46L31 30M40 46L31 62" stroke="#b8b8b8" stroke-width="4"/><circle cx="40" cy="46" r="4" fill="#d4d4d4"/></svg></div>
  <div class="app"><svg viewBox="0 0 80 90"><rect x="22" y="17" width="50" height="58" rx="3" fill="#379062"/><path d="M47 17H69Q72 17 72 20V32H47Z" fill="#62c488"/><path d="M47 32H72V46H47Z" fill="#4aa670"/><path d="M22 46H47V60H22Z" fill="#2d6d43"/><path d="M47 46H72V60H47Z" fill="#388b55"/><path d="M22 60H72V72Q72 75 69 75H25Q22 75 22 72Z" fill="#2b5f3d"/><rect x="7" y="29" width="33" height="33" rx="3" fill="#2a7744"/><text x="23.500" y="55" class="t-excel">X</text></svg></div>
  <div class="app"><svg viewBox="0 0 80 90"><circle cx="40" cy="46" r="38" fill="url(#gMesh)"/><path d="M40 8Q50 8 58 13L24 80Q2 68 2 46T40 8Z" fill="url(#gRing)"/><path d="M40 13Q58 11 59 30Q59 52 44 66L8 41Q14 17 40 13Z" fill="#fff"/><path d="M9 41Q22 58 44 66Q38 74 27 74Q6 64 9 41Z" fill="#b9d9f0"/><path d="M22 77Q40 62 72 64Q60 84 40 84Q30 84 22 77Z" fill="#4d9143"/></svg></div>
  <div class="app on"><svg viewBox="0 0 80 90"><rect x="9" y="15" width="61" height="61" rx="12" fill="#fcfcfc"/><circle cx="40" cy="46" r="25" fill="#51975c"/><path d="M40 46L17 36Q25 21 40 21Q56 21 62 35H40Z" fill="#c94f3e"/><path d="M40 35H62.500Q66 43 64 53Q57 71 39 71L51 50Z" fill="#f3cb55"/><path d="M18.500 33L29 51L40 46L30 34Z" fill="#c94f3e"/><circle cx="40" cy="46" r="12" fill="#fff"/><circle cx="40" cy="46" r="9.500" fill="#5485ea"/></svg></div>
  <div class="app"><svg viewBox="0 0 80 90"><circle cx="40" cy="46" r="33" fill="#eef1f6"/><circle cx="40" cy="46" r="30.500" fill="url(#gBlue)"/><path d="M43 27L27 53M24 60L25.500 57.500M37 27L56 60" stroke="#fff" stroke-width="5" stroke-linecap="round"/><path d="M21 50.500H59" stroke="#fff" stroke-width="5" stroke-linecap="round"/></svg></div>
  <div class="app"><svg viewBox="0 0 80 90"><path d="M12 19L61 12L69 72L21 79Z" fill="#d4dee3" stroke="#f4f6f7" stroke-width="2.500"/><path d="M35 62H75V68H35Z" fill="#b99763"/><path d="M52 54L56 53L41 77L37 80L37 75Z" fill="#edb53e"/><path d="M49 52L52 48L57 50L55 55Z" fill="#e27a84"/><path d="M53 48L57 46L70 71L67 74Z" fill="#a5421f"/><path d="M67 71L71 69Q75 75 72 80Q68 78 67 71Z" fill="#503a28"/></svg></div>
  <div class="app vbox"><svg viewBox="0 0 80 90"><ellipse cx="42" cy="72" rx="18" ry="7" fill="#aab5d0"/><path d="M40 9L70 23L67 58L40 74L13 58L10 23Z" fill="#dfe6f2"/><path d="M40 38L70 23L67 58L40 74Z" fill="#a9b9dc"/><path d="M40 9L70 23L40 38L10 23Z" fill="#d3dcea"/><path d="M40 12L60 22L40 33L20 22Z" fill="#1d3557"/><path d="M28 22L36 18L37 25L44 17L44 25L52 20" fill="none" stroke="#fff" stroke-width="2"/><path d="M14 30L36 42V66L16 54Z" fill="#1c3658"/><path d="M66 30L44 42V66L64 54Z" fill="#1c3658"/><text x="25" y="50" class="t-vb" transform="rotate(28 25 48)">ORACLE</text><text x="55" y="50" class="t-vb" transform="rotate(-28 55 48)">VirtualBox</text></svg></div>
  <div class="sep short"></div>
  <div class="app on"><svg viewBox="0 0 80 90"><rect x="9" y="15" width="62" height="62" rx="14" fill="#fbfbfb"/><g stroke-width="9" stroke-linecap="round"><path d="M23.500 40H34.500M34.500 28.500V29" stroke="#5fc0e6"/><path d="M45.500 28.500V39.500M57 40H57.500" stroke="#51ab79"/><path d="M34.500 51.500V62.500M23 51.500H23.500" stroke="#cf3358"/><path d="M45.500 51.500H56.500M45.500 62.500V63" stroke="#e2b245"/></g></svg><em>97</em></div>
  <div class="app on"><svg viewBox="0 0 80 90"><use href="#outlook" x="6" y="11" width="67" height="65"/></svg><em class="long">9650</em></div>
  <div class="app on"><svg viewBox="0 0 80 90"><rect x="6" y="12" width="67" height="67" rx="18" fill="url(#gZoom)"/><rect x="19" y="34" width="30" height="23" rx="5" fill="#fff"/><path d="M51 41L60 35V57L51 51Z" fill="#fff"/></svg><em>2</em></div>
  <div class="app on"><svg viewBox="0 0 80 90"><use href="#code" x="7" y="12" width="66" height="67"/></svg></div>
  <div class="app on"><svg viewBox="0 0 80 90"><rect x="7" y="17" width="66" height="57" rx="3" fill="#b2b5b8"/><rect x="8.500" y="18.500" width="63" height="54" rx="2" fill="#060606"/><rect x="11" y="21" width="58" height="49" fill="#272727"/><path d="M16 27L24 31L16 35M26 37H35" fill="none" stroke="#fff" stroke-width="2.400"/></svg></div>
  <div class="app on"><svg viewBox="0 0 80 90"><circle cx="41" cy="43" r="34" fill="#e67740"/><path d="M5 80L11 74L17 80Z" fill="#e0673c"/><path d="M46 35Q31 36 19 57L31 59L43 46Z" fill="#f2a33b" stroke="#fff" stroke-width="1.500"/><path d="M54 34Q50 46 35 60L19 77L18 82L13 74L10 73L26 58L34 51L46 38Z" fill="#9b9b9b" stroke="#fff" stroke-width="1.500"/><circle cx="56" cy="29" r="8.500" fill="#a2a2a2" stroke="#fff" stroke-width="1.500"/><path d="M54 29L62 23V35Z" fill="#6d6d6d"/></svg></div>
  <div class="app on"><svg viewBox="0 0 80 90"><use href="#preview" x="5" y="14" width="70" height="64"/></svg></div>
  <div class="sep"></div>
  <div class="app"><svg viewBox="0 0 80 90"><path d="M14 20H65V45H14Z" fill="#e8e8e8"/><path d="M18 12H42L62 34V69H18Z" fill="#fafafa"/><path d="M42 12Q46 22 45 30L62 36Q58 20 42 12Z" fill="#cfcfcf"/><path d="M37 12H43V46H37Z" fill="#5e6265"/><path d="M37 15H43M37 19H43M37 23H43M37 32H43M37 36H43M37 40H43" stroke="#bbb" stroke-width="1.500"/><circle cx="40" cy="30" r="3" fill="#e4e4e4"/><path d="M8 43H72V55H8Z" fill="#f3f3f3"/><path d="M11 45.500H69V52.500H11Z" fill="#242b38"/><path d="M18 55H62V69H18Z" fill="#fafafa"/><text x="40" y="66.500" class="t-zip">ZIP</text></svg></div>
  <div class="app"><svg viewBox="0 0 80 90"><path d="M4 22H76V69H4Z" fill="#f8f9fb"/><path d="M4 22H76V26H4Z" fill="#2c73c8"/><path d="M8 30H30M12 33H48" stroke="#999"/><circle cx="8" cy="31" r="1.500" fill="#b33"/><path d="M6 39H46M6 43H34M6 47H60M6 49H68M6 57H50M6 59H64M6 67H40" stroke="#8d9de0" stroke-width="1.200"/><use href="#outlook" x="50" y="56" width="25" height="25"/></svg></div>
  <div class="app"><svg viewBox="0 0 80 90"><path d="M4 28H76V65H4Z" fill="#222324"/><path d="M4 28H76V29.500H4Z" fill="#555"/><path d="M8 30H18V62H8Z" fill="#2e3032"/><path d="M8 37H18" stroke="#2f7dc0" stroke-width="1.500"/><path d="M21 33H36M24 36H48M24 40H66M22 46H44" stroke="#5b6670"/><path d="M4 63.500H76V65H4Z" fill="#2f7dc8"/><use href="#code" x="50" y="55" width="26" height="26"/></svg></div>
  <div class="app"><svg viewBox="0 0 80 90"><path d="M4 28H76V65H4Z" fill="#222324"/><path d="M4 28H76V29.500H4Z" fill="#555"/><path d="M10 33H20M12 36H28M12 39H26M12 43H30M12 47H27M12 50H22M11 59H33M42 33H55M44 37H52M42 43H50M40 50H54M42 54H62" stroke="#5b6670"/><path d="M12 41H24M11 61H30" stroke="#9c5b45"/><path d="M4 63.500H76V65H4Z" fill="#2f7dc8"/><use href="#code" x="50" y="55" width="26" height="26"/></svg></div>
  <div class="app"><svg viewBox="0 0 80 90"><path d="M4 22H76V69H4Z" fill="#f4f3f6"/><path d="M4 27H58V66H4Z" fill="#1e1f22"/><path d="M30 26H50V28H30Z" fill="#4fce4d"/><path d="M57 27H61V66H57Z" fill="#7d2c38"/><path d="M14 33H28M22 37H38M22 42H36M24 48H44M24 52H40M24 57H36" stroke="#58707a"/><path d="M6 67.500H60" stroke="#b84d5c" stroke-width="1.500" stroke-dasharray="2 1"/><path d="M62 30H70M62 33H68" stroke="#d7b04a"/><use href="#preview" x="51" y="57" width="26" height="24"/></svg></div>
  <div class="app"><svg viewBox="0 0 80 90"><path d="M13 19Q13 12 40 12T67 19L60 73Q58 80 40 80T20 73Z" fill="url(#gCan)"/><ellipse cx="40" cy="19" rx="26" ry="6" fill="#b7b5b7" stroke="#ececec" stroke-width="1.500"/></svg></div>
</footer>
</body>
</html>
```
FILE: styles.css
```css
* { box-sizing: border-box; }
html, body { margin: 0; height: 2100px; overflow: hidden; }
body {
  width: 3360px;
  display: flex;
  flex-direction: column;
  background: linear-gradient(90deg, #2a1a17 0, #17100f 120px, #100d0e 3280px, #1c1212 100%);
  font-family: Inter, "Liberation Sans", sans-serif;
  color: #212529;
}
.defs { position: absolute; }
svg { display: block; flex: none; }
.land { fill: #e4e6ea; }

/* menu bar */
.menubar {
  height: 46px;
  flex: none;
  display: flex;
  align-items: center;
  border-bottom: 2px solid #25222c;
  background: linear-gradient(90deg, #e9dfdf 0, #e5dadd 600px, #dfdce5 1180px, #e6dde0 1560px, #dbd9e4 1850px, #cfd5e6 2400px, #c2cde0 100%);
  font-size: 27px;
}
.apple { width: 27px; height: 36px; margin: -6px 0 0 41px; }
.menus {
  margin-left: 41px;
  display: grid;
  grid-template-columns: 146px 81px 87px 99px 130px 181px 134px 84px 139px 80px;
  color: #33292e;
  letter-spacing: 0;
  white-space: nowrap;
}
.menus b { letter-spacing: .3px; }
.status { display: flex; align-items: center; margin-left: auto; padding-right: 45px; color: #1c2332; white-space: nowrap; }
.s-zoom { width: 32px; height: 32px; }
.s-docker { width: 36px; height: 30px; margin-left: 21px; }
.s-b { width: 33px; height: 24px; margin-left: 25px; }
.s-swirl { width: 32px; height: 32px; margin-left: 27px; }
.s-shield { width: 29px; height: 32px; margin-left: 30px; }
.s-key { width: 36px; height: 36px; margin-left: 27px; }
.s-wifi { width: 41px; height: 29px; margin-left: 20px; }
.pct { width: 56px; margin-left: 23px; font-size: 23.500px; letter-spacing: -.4px; }
.s-batt { width: 46px; height: 24px; }
.clock { width: 157px; margin-left: 42px; letter-spacing: .35px; }
.s-search { width: 29px; height: 29px; margin-left: 47px; }
.s-siri { width: 32px; height: 32px; margin-left: 35px; }
.s-list { width: 37px; height: 21px; margin-left: 24px; }

/* browser window */
.window {
  height: 1956px;
  flex: none;
  display: flex;
  flex-direction: column;
  border-radius: 10px;
  overflow: hidden;
  background: #fff;
}
.tabstrip {
  height: 84px;
  flex: none;
  display: flex;
  align-items: flex-end;
  background: #dee1e6;
  border-top: 2px solid #eff0f3;
}
.lights { width: 157px; height: 68px; flex: none; display: flex; gap: 16px; padding: 14px 0 0 26px; align-self: flex-start; margin-top: 15px; }
.lights i { width: 24px; height: 24px; border-radius: 50%; border: 1px solid #d65b50; background: #ed6a5e; }
.lights .yellow { background: #f5bf4f; border-color: #d6a243; }
.lights .green { background: #61c554; border-color: #50a845; }
.tab {
  position: relative;
  width: 164px;
  height: 68px;
  flex: none;
  display: flex;
  align-items: center;
  padding-left: 15px;
  font-size: 23.500px;
  letter-spacing: .1px;
  color: #3c4043;
}
.tab.wide { width: 166px; padding-left: 23px; }
.tab > svg { width: 32px; height: 32px; }
.tab span {
  width: 86px;
  margin-left: 16px;
  overflow: hidden;
  white-space: nowrap;
  line-height: 36px;
  -webkit-mask-image: linear-gradient(90deg, #000 calc(100% - 36px), transparent);
  mask-image: linear-gradient(90deg, #000 calc(100% - 36px), transparent);
}
.tab.wide span { width: 42px; }
.tab.active span { width: 48px; }
.tab > .x { width: 20px; height: 20px; margin-left: 12px; }
.tab::after { content: ""; position: absolute; right: -1px; top: 15px; width: 2px; height: 40px; background: #868a90; }
.tab.last::after { display: none; }
.tab.active { width: 166px; background: #fff; border-radius: 16px 16px 0 0; }
.tab.active::before, .tab.active::after {
  content: "";
  position: absolute;
  top: auto;
  bottom: 0;
  width: 16px;
  height: 16px;
  background: radial-gradient(circle at 0 0, transparent 15.500px, #fff 16px);
}
.tab.active::before { left: -16px; }
.tab.active::after { right: -16px; background: radial-gradient(circle at 100% 0, transparent 15.500px, #fff 16px); }
.plus { width: 24px; height: 24px; margin: 0 0 22px 31px; }
.drop { width: 28px; height: 28px; margin: 0 30px 20px auto; }

.toolbar { height: 74px; flex: none; display: flex; align-items: center; padding-left: 24px; border-bottom: 2px solid #dadce0; }
.nav-i { width: 40px; height: 40px; }
.fwd { margin-left: 24px; }
.rel { margin-left: 25px; }
.omnibox {
  width: 2864px;
  height: 56px;
  margin-left: 23px;
  display: flex;
  align-items: center;
  padding: 0 16px 0 20px;
  border-radius: 28px;
  background: #f1f3f4;
  font-size: 27px;
  white-space: nowrap;
}
.info { width: 32px; height: 32px; }
.scheme { width: 61px; height: 32px; line-height: 32px; margin-left: 16px; color: #63676b; border-right: 2px solid #9a9da1; }
.url { margin-left: 18px; color: #202124; letter-spacing: .12px; }
.star { width: 36px; height: 36px; margin: -2px 2px 0 auto; }
.me { width: 32px; height: 32px; margin-left: 28px; border-radius: 50%; background: #9ba4c4; color: #fff; font-size: 17px; line-height: 30px; text-align: center; letter-spacing: -.5px; }
.puzzle { width: 33px; height: 33px; margin: -2px 0 0 31px; }
.avatar { width: 44px; height: 44px; margin-left: 26px; border-radius: 50%; background: #b32d5b; color: #fff; font-size: 23px; line-height: 44px; text-align: center; }
.kebab { margin-left: 39px; display: flex; flex-direction: column; gap: 7px; }
.kebab i { width: 6px; height: 6px; border-radius: 50%; background: #5f6368; }

/* dashboard */
.page { position: relative; flex: 1; display: flex; flex-direction: column; align-items: flex-start; }
.page h1 {
  width: 100%;
  height: 128px;
  margin: 0;
  background: #2f7df6;
  color: #f8f9fa;
  font-size: 78.500px;
  font-weight: 550;
  line-height: 131px;
  text-align: center;
  letter-spacing: -2.900px;
}
.sidebar { width: 840px; flex: 1; padding: 33px 30px; background: #f8f9fb; }
.sidebar h3 { margin: 0 0 15px; font-size: 54.500px; font-weight: 550; line-height: 66px; letter-spacing: -1.800px; }
.search { display: flex; }
.search input { width: 386px; height: 76px; padding: 0 24px; border: 2px solid #ced4da; border-radius: 8px; background: #fff; }
.search button { width: 84px; height: 76px; padding: 0; border: 0; border-radius: 8px; background: #2f7df6; display: grid; place-items: center; }
.search svg { width: 32px; height: 32px; }
.scrollbar { position: absolute; right: 4px; top: 4px; width: 14px; height: 1670px; border-radius: 7px; background: rgba(0, 0, 0, .5); }

/* dock */
.dock {
  position: relative;
  width: 3204px;
  height: 98px;
  margin-left: 78px;
  padding-left: 6px;
  display: flex;
  border-radius: 12px 12px 0 0;
  background: linear-gradient(90deg, #685955, #625553 50%, #5f5351);
  box-shadow: 0 0 100px rgba(0, 0, 0, .17);
}
.app { position: relative; width: 80px; height: 98px; }
.app > svg { width: 80px; height: 90px; overflow: visible; }
.app.on::after { content: ""; position: absolute; left: 36px; top: 86px; width: 8px; height: 8px; border-radius: 50%; background: #000; }
.app em {
  position: absolute;
  right: 2px;
  top: 8px;
  min-width: 28px;
  height: 28px;
  border-radius: 14px;
  background: #e64f42;
  color: #fff;
  font-size: 15.500px;
  font-style: normal;
  line-height: 28px;
  text-align: center;
}
.app em.long { width: 44px; font-size: 16px; }
.sep { width: 36px; padding: 14px 0 0 17px; }
.sep::before { content: ""; display: block; width: 2px; height: 70px; background: #2c2322; }
.sep.short { padding: 26px 0 0 18px; }
.sep.short::before { height: 46px; }
.vbox > svg { margin-left: -5px; }

/* lettering inside icons */
text { text-anchor: middle; font-family: Inter, "Liberation Sans", sans-serif; }
.t-bj { font-size: 21px; font-weight: 600; fill: #cfd5e5; }
.t-ucb { font: 700 4.400px "Liberation Serif", serif; fill: #12305e; }
.t-js { font: 700 14px Lato, sans-serif; fill: #222; }
.t-js.light { fill: #fff; }
.t-w3 { font-size: 11px; font-weight: 600; fill: #41976b; }
.t-outlook { font-size: 24px; font-weight: 700; fill: #fff; }
.t-may { font-size: 12px; fill: #fff; }
.t-day { font-size: 34px; font-weight: 300; fill: #222; }
.t-3d { font-size: 12px; fill: #333; }
.t-pages { font-size: 8px; fill: #fff; }
.t-excel { font-size: 25px; font-weight: 700; fill: #fff; }
.t-vb { font-size: 4.500px; font-weight: 700; fill: #dfe6f2; }
.t-zip { font-size: 10px; fill: #555; }
```
